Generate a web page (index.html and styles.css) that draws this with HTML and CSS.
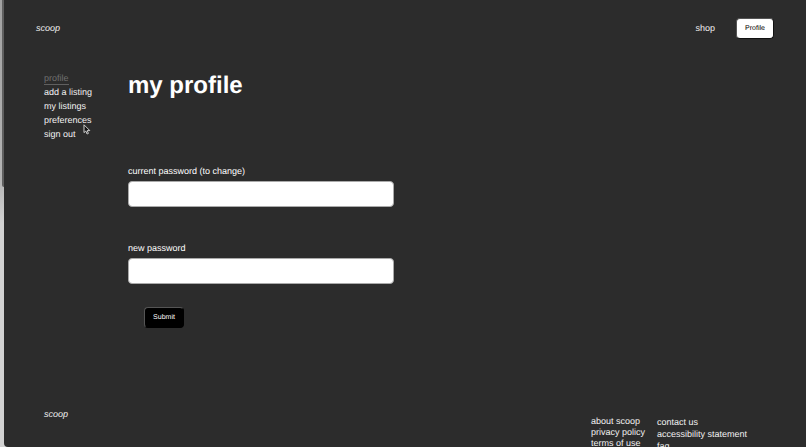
FILE: index.html
```html
<!DOCTYPE html>
<html lang="en">
<head>
<meta charset="utf-8">
<title>scoop</title>
<link rel="stylesheet" href="styles.css">
</head>
<body>
<div class="window">
  <header class="header">
    <a class="brand" href="#">scoop</a>
    <nav class="header-nav">
      <a href="#">shop</a>
      <button class="btn btn-light" type="button">Profile</button>
    </nav>
  </header>
  <div class="content">
    <nav class="sidebar">
      <a class="current" href="#">profile</a>
      <a href="#">add a listing</a>
      <a href="#">my listings</a>
      <a href="#">preferences</a>
      <a href="#">sign out</a>
    </nav>
    <main class="main">
      <h1>my profile</h1>
      <form class="form">
        <div class="field">
          <label for="current">current password (to change)</label>
          <input id="current" type="password">
        </div>
        <div class="field">
          <label for="new">new password</label>
          <input id="new" type="password">
        </div>
        <button class="btn btn-dark" type="button">Submit</button>
      </form>
    </main>
  </div>
  <footer class="footer">
    <a class="brand" href="#">scoop</a>
    <div class="footer-links">
      <div class="footer-column">
        <a href="#">about scoop</a>
        <a href="#">privacy policy</a>
        <a href="#">terms of use</a>
      </div>
      <div class="footer-column wide">
        <a href="#">contact us</a>
        <a href="#">accessibility statement</a>
        <a href="#">faq</a>
      </div>
    </div>
  </footer>
</div>
<svg class="cursor" viewBox="0 0 8 11" aria-hidden="true"><path d="M1 .8V8.6L2.8 7L4.1 10L5.4 9.4L4.2 6.6H6.8Z"/></svg>
</body>
</html>
```
FILE: styles.css
```css
* {
  box-sizing: border-box;
}

body {
  margin: 0;
  height: 100vh;
  padding-left: 4px;
  overflow: hidden;
  background: linear-gradient(#a2a2a2, #b4b4b4 40%, #d2d2d2 50%, #d2d2d2);
  color: #f2f2f2;
  font: 9px/11px "Liberation Sans", Arial, sans-serif;
  text-rendering: geometricPrecision;
}

.window {
  height: 100%;
  overflow: hidden;
  border-bottom-left-radius: 4px;
  background: #2c2c2c;
}

body::before {
  content: "";
  position: absolute;
  top: 0;
  left: 2px;
  width: 2px;
  height: 187px;
  border-bottom-left-radius: 2px;
  background: #606060;
}

a {
  color: inherit;
  text-decoration: none;
}

.brand {
  font-style: italic;
}

.header {
  display: flex;
  align-items: center;
  justify-content: space-between;
  padding: 18px 32px 0;
}

.header-nav {
  display: flex;
  align-items: center;
  gap: 21px;
}

.btn {
  border-radius: 4px;
  font: 7px/9px "Liberation Sans", Arial, sans-serif;
  text-rendering: inherit;
}

.btn-light {
  width: 38px;
  height: 21px;
  padding: 0;
  border: 1px solid #111;
  border-top-color: #555;
  border-left-color: #555;
  background: #fff;
  color: #000;
}

.btn-dark {
  width: 40px;
  height: 21px;
  margin: 23px 0 0 16px;
  padding: 0;
  border: 1px solid #000;
  border-top-color: #555;
  border-left-color: #555;
  background: #000;
  color: #fff;
}

.content {
  display: flex;
  padding: 32px 40px 0;
}

.sidebar {
  display: flex;
  flex: 0 0 84px;
  flex-direction: column;
  align-items: flex-start;
  gap: 3px;
  padding-top: 2px;
}

.sidebar .current {
  box-shadow: 0 1px #606060;
  color: #707070;
}

.main {
  flex: 1;
}

h1 {
  margin: 0;
  color: #fff;
  font-size: 24px;
  line-height: 30px;
}

.form {
  display: flex;
  flex-direction: column;
  align-items: flex-start;
  padding-top: 65px;
}

.field {
  width: 100%;
  max-width: 266px;
}

.field + .field {
  margin-top: 36px;
}

.field label {
  display: block;
  margin-bottom: 4px;
  color: #fff;
}

.field input {
  display: block;
  width: 100%;
  height: 26px;
  padding: 0 8px;
  border: 1px solid #aaa;
  border-radius: 4px;
  background: #fff;
}

.footer {
  display: flex;
  justify-content: space-between;
  padding: 81px 59px 0 40px;
}

.footer-links {
  display: flex;
  gap: 12px;
  padding-top: 7px;
}

.footer-column {
  display: flex;
  flex-direction: column;
}

.footer-column.wide {
  line-height: 12px;
}

.cursor {
  position: absolute;
  top: 124px;
  left: 83px;
  width: 8px;
  height: 11px;
  fill: #111;
  stroke: #d0d0d0;
  stroke-width: 1;
}
```
